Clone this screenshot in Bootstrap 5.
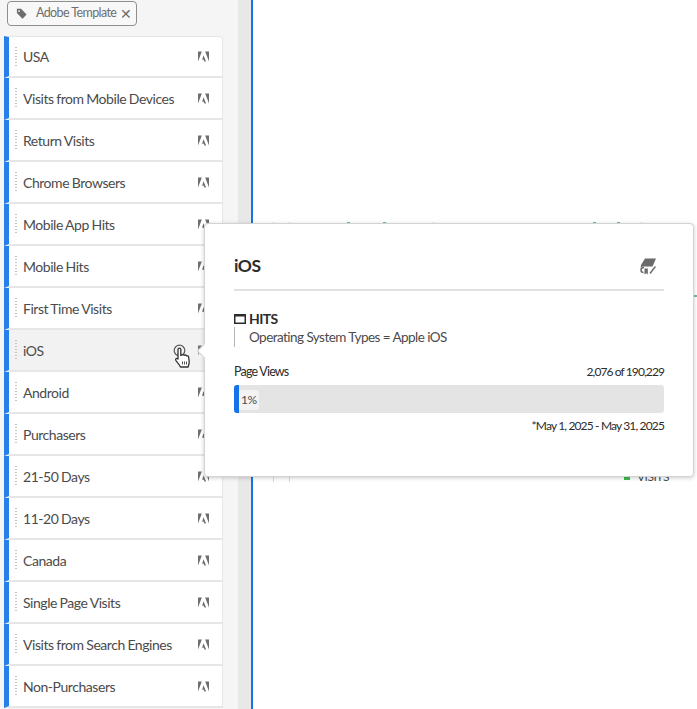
<!DOCTYPE html>
<html lang="en"><head><meta charset="utf-8"><title>Segments</title>
<link href="https://cdn.jsdelivr.net/npm/bootstrap@5.3.0/dist/css/bootstrap.min.css" rel="stylesheet">
<style>
html,body{height:709px;overflow:hidden}
body{font-family:"Lato","Noto Sans",sans-serif;color:#4b4b4b;background:#fff}
.shell{height:709px;position:relative}
.rail{width:238px;background:#f5f5f5;padding:0 15px 0 4px}
.gutter{width:13px;background:#e8e8e8}
.mainpane{border-left:2px solid #1473e6;background:#fff;position:relative}
.tagpill{height:25px;margin:1px 0 10px 3px;width:130px;border:1px solid #8e8e8e;border-radius:4px;padding:0 6px 0 8px;font-size:12.5px;letter-spacing:-.6px;color:#6e6e6e;gap:9px;background:#f8f8f8;white-space:nowrap}
.tagclose{font-size:14px;margin-left:-5px;line-height:1}
.seglist{border-radius:4px 4px 0 0}
.segrow{height:42px;border-left:5px solid #2680eb;background:#fff;border-bottom:2px solid #e6e6e6;font-size:14px;letter-spacing:-.45px;word-spacing:-.5px;color:#4b4b4b;padding:0 13px 0 6px;border-right:1px solid #e6e6e6;white-space:nowrap}
.segrow:first-child{border-top:1px solid #e6e6e6;border-top-right-radius:4px}
.segrow.hovered{background:#f2f2f2}
.gripdots{width:2px;height:22px;margin-right:6px;background-image:radial-gradient(circle,#c4c4c4 0.8px,transparent 1px);background-size:2px 3px}
.cursorhand{position:absolute;left:171px;top:344px;z-index:3}
.pop{position:absolute;left:204px;top:223px;width:490px;height:254px;background:#fff;border:1px solid #d3d3d3;border-radius:4px;box-shadow:0 1px 4px rgba(0,0,0,.2);padding:0 29px;z-index:1}
.poparrow{position:absolute;left:-6px;top:122px;width:10px;height:10px;background:#fff;border-left:1px solid #d3d3d3;border-bottom:1px solid #d3d3d3;transform:rotate(45deg)}
.pophead{height:67px;border-bottom:2px solid #e1e1e1;padding:19px 8px 0 0}
.poptitle{font-size:17.5px;letter-spacing:-.5px;font-weight:700;color:#2c2c2c;margin:0;line-height:1}
.typerow{margin-top:19px;font-size:14px;letter-spacing:-.6px;font-weight:700;color:#2c2c2c;gap:3px;line-height:17px}
.defrow{height:20px;border-left:1px solid #b3b3b3;padding-left:14px;font-size:13.5px;letter-spacing:-.55px;color:#4b4b4b;line-height:20px;white-space:nowrap}
.statrow{margin-top:17px;font-size:12px;letter-spacing:-.9px;color:#2c2c2c;line-height:16px}
.statname{font-size:12.5px;letter-spacing:-.8px}
.barwrap{margin-top:5px;height:28px;background:#e4e4e4;border-radius:3px;overflow:hidden}
.barfill{width:5px;background:#1473e6}
.barlabel{margin:1px 0 0 0;height:20px;align-self:center;background:#f3f3f3;border-radius:3px;padding:0 2px;font-size:12px;letter-spacing:-.5px;line-height:20px;color:#4b4b4b}
.daterow{margin-top:5px;font-size:12px;letter-spacing:-.85px;color:#2c2c2c;text-align:right;line-height:16px}
.tick{position:absolute;width:3px;height:3px;background:#6fb9a8}
.tickg{position:absolute;width:1px;height:5px;background:#d8d8d8}
.visitlbl{position:absolute;top:471px;left:371px;font-size:12px;letter-spacing:-.5px;line-height:12px;color:#4b4b4b;display:flex;align-items:center;gap:7px}
.visitsq{display:inline-block;width:6px;height:6px;background:#3fb950}
</style></head><body>
<div class="shell d-flex">
  <div class="rail flex-shrink-0">
    <div class="tagpill d-flex align-items-center">
      <svg class="flex-shrink-0" width="11" height="11" viewBox="0 0 13 13"><path fill="#6e6e6e" d="M1 1h5l6 6a1 1 0 0 1 0 1.400L8.400 12a1 1 0 0 1-1.400 0L1 6z"/><circle cx="3.600" cy="3.600" r="1" fill="#f8f8f8"/></svg>
      <span>Adobe Template</span><span class="tagclose">✕</span>
    </div>
    <div class="seglist" id="seglist"></div>
  </div>
  <div class="gutter flex-shrink-0"></div>
  <div class="mainpane flex-grow-1">
    <span class="tick" style="left:94px;top:222px"></span><span class="tick" style="left:130px;top:222px"></span><span class="tick" style="left:340px;top:222px"></span><span class="tick" style="left:364px;top:222px"></span>
    <span class="tickg" style="left:20px;top:222px"></span><span class="tickg" style="left:36px;top:222px"></span><span class="tickg" style="left:180px;top:222px"></span><span class="tickg" style="left:388px;top:222px"></span>
    <span class="tick" style="left:441px;top:295px;width:3px;height:2px"></span>
    <span class="tickg" style="left:20px;top:477px"></span><span class="tickg" style="left:36px;top:477px"></span>
    <div class="visitlbl"><span class="visitsq"></span><span>VISITS</span></div>
  </div>
  <svg class="cursorhand" width="22" height="25" viewBox="0 0 22 25"><circle cx="8.500" cy="6.500" r="5.300" fill="none" stroke="#5a5a5a" stroke-width="1.200"/><path d="M7 5.500c0-1.800 2.800-1.800 2.800 0V11.500l1-.3c.5-1 2-.8 2.300.2.600-.7 2-.5 2.300.5.700-.4 2-.2 2.200.9l.6 4.700c.1 2-.4 3.500-1.100 5.500H9.500c-1-2.300-2.500-4-4.500-6.300-1.200-1.500.6-3.100 2-1.700l0 0z" fill="#fff" stroke="#333" stroke-width="1.300" stroke-linejoin="round"/><path d="M11.500 17.500v3M13.500 17.500v3M15.500 17.500v3" stroke="#555" stroke-width="1"/></svg>
  <div class="pop">
    <span class="poparrow"></span>
    <div class="pophead d-flex justify-content-between align-items-center">
      <h2 class="poptitle">iOS</h2>
      <svg width="16" height="17" viewBox="0 0 16 17"><path fill="#6b6b6b" d="M5 .5h11l-3.500 8H3C1.800 8.500 1 9.300 .6 10.500L1 7z"/><path fill="none" stroke="#6b6b6b" stroke-width="1.500" d="M4 9.500c-2 0-3 1-3 2.500s1 2.500 2.500 2.500M10 15.500l5.500-7"/><path fill="#6b6b6b" d="M4.500 10.500h3.300v6L6.200 15.300l-1.700 1.200z"/></svg>
    </div>
    <div class="typerow d-flex align-items-center">
      <svg width="12" height="10" viewBox="0 0 12 10"><rect x=".75" y=".75" width="10.500" height="8.500" fill="none" stroke="#2c2c2c" stroke-width="1.500"/><rect x="1" y="1" width="10" height="1.500" fill="#2c2c2c"/></svg>
      <span>HITS</span>
    </div>
    <div class="defrow">Operating System Types = Apple iOS</div>
    <div class="statrow d-flex justify-content-between"><span class="statname">Page Views</span><span>2,076 of 190,229</span></div>
    <div class="barwrap d-flex"><div class="barfill"></div><div class="barlabel">1%</div></div>
    <div class="daterow">*May 1, 2025 - May 31, 2025</div>
  </div>
</div>
<script src="https://cdn.jsdelivr.net/npm/bootstrap@5.3.0/dist/js/bootstrap.bundle.min.js"></script>
<script>
var names=["USA","Visits from Mobile Devices","Return Visits","Chrome Browsers","Mobile App Hits","Mobile Hits","First Time Visits","iOS","Android","Purchasers","21-50 Days","11-20 Days","Canada","Single Page Visits","Visits from Search Engines","Non-Purchasers"];
var logo='<svg width="11" height="11" viewBox="0 0 12 11"><path fill="#6e6e6e" d="M0 0h4.200L0 11zM12 0H7.800L12 11zM6 4l2.800 7H7L6.200 9H4.500z"/></svg>';
document.getElementById("seglist").innerHTML=names.map(function(n){
 return '<div class="segrow d-flex align-items-center'+(n==="iOS"?" hovered":"")+'"><span class="gripdots"></span><span class="flex-grow-1">'+n+'</span>'+logo+'</div>';
}).join("");
</script>
</body></html>
